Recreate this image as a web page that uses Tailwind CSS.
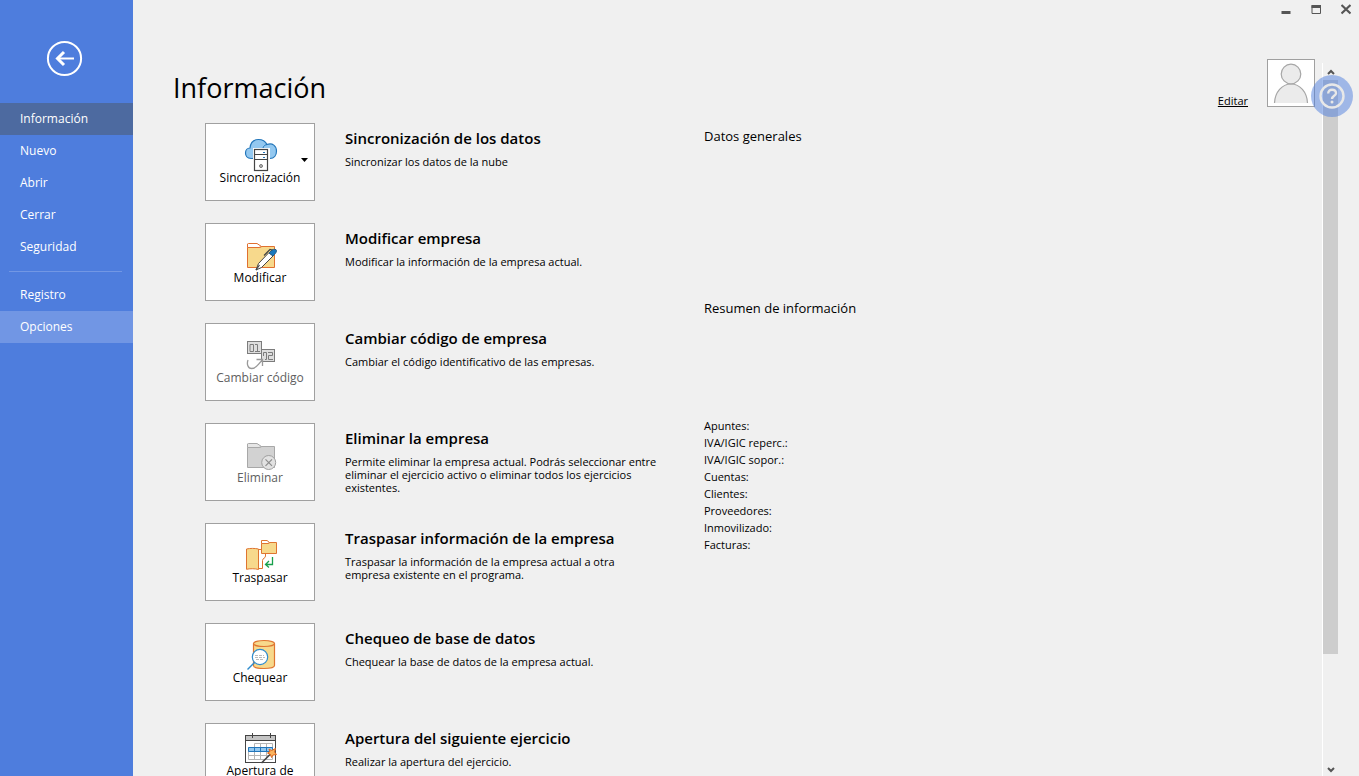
<!DOCTYPE html>
<html lang="es">
<head>
    <meta charset="UTF-8">
    <meta name="viewport" content="width=device-width, initial-scale=1.0">
    <title>Información</title>
    <script src="https://cdn.jsdelivr.net/npm/@tailwindcss/browser@4"></script>
</head>
<body class="relative flex h-screen overflow-hidden bg-[#f0f0f0] font-['Open_Sans','Noto_Sans',sans-serif] text-black">

    <!-- Sidebar -->
    <aside class="w-[133px] shrink-0 bg-[#4e7ddd] text-[12px] text-white">
        <div class="flex h-[103px] items-center pt-[13px] pl-[46px]">
            <button aria-label="Volver" class="block">
                <svg class="block" width="37" height="37" viewBox="0 0 37 37" fill="none" stroke="#fff">
                    <circle cx="18.5" cy="18.5" r="16.6" stroke-width="2"/>
                    <path d="M11.5 18.5H28" stroke-width="2"/>
                    <path d="M18 12L11.5 18.5L18 25" stroke-width="3"/>
                </svg>
            </button>
        </div>
        <nav>
            <a href="#" class="block h-8 bg-[#4d6aa0] pl-5 leading-8">Información</a>
            <a href="#" class="block h-8 pl-5 leading-8">Nuevo</a>
            <a href="#" class="block h-8 pl-5 leading-8">Abrir</a>
            <a href="#" class="block h-8 pl-5 leading-8">Cerrar</a>
            <a href="#" class="block h-8 pl-5 leading-8">Seguridad</a>
            <hr class="mt-2 mr-[11px] mb-[7px] ml-[9px] border-[#7297e4]">
            <a href="#" class="block h-8 pl-5 leading-8">Registro</a>
            <a href="#" class="block h-8 bg-[#7196e4] pl-5 leading-8">Opciones</a>
        </nav>
    </aside>

    <!-- Content -->
    <main class="flex min-w-0 flex-1 flex-col pt-[59px] pl-10">
        <header class="flex h-16 shrink-0 justify-between pr-[7px]">
            <h1 class="pt-[7px] text-[27px] leading-11">Información</h1>
            <div class="flex items-start gap-[19px]">
                <a href="#" class="mt-[34px] text-[11px] leading-4 underline">Editar</a>
                <div class="size-12 border border-[#a0a0a0] bg-white">
                    <svg class="block" width="46" height="46" viewBox="0 0 46 46" fill="#ebebeb" stroke="#a6a6a6" stroke-width="1.2">
                        <path d="M6.5 43C7 32 14 24 23 24S39 32 39.5 43"/>
                        <circle cx="23" cy="14" r="9.8"/>
                    </svg>
                </div>
            </div>
        </header>

        <div class="flex items-start pl-8">
            <div class="w-[499px] shrink-0">
                <section class="flex h-[100px] gap-[30px]">
                    <button class="relative flex h-[78px] w-[110px] shrink-0 flex-col items-center border border-[#a0a0a0] bg-white pt-3 text-[12px] leading-3">
                        <svg class="shrink-0" width="36" height="36" viewBox="0 0 36 36" fill="none">
                            <path d="M9 22.5C5 22.5 3.5 19.5 3.5 17C3.5 14 5.5 12 8 12C8.500 6.500 12 3.500 16.500 3.500C20.500 3.500 23.500 5.500 25 8.500C30.500 6.500 34.500 10 34.500 15C34.500 19.500 32 22.500 28 22.500Z" fill="#93c8f0" stroke="#2376ba" stroke-width="1.2"/>
                            <path d="M21 12C21.5 10 23 8.8 25 8.5" stroke="#2376ba"/>
                            <rect x="11" y="12" width="17" height="24" fill="#fff"/>
                            <rect x="12.500" y="13.500" width="13" height="21" stroke="#444" stroke-width="1.2"/>
                            <path d="M12.5 18.5H25.5M12.5 23.5H25.5" stroke="#444" stroke-width="1.2"/>
                            <path d="M21 16.5H23M21 21.5H23" stroke="#2376ba"/>
                            <circle cx="19" cy="30" r="1.5" fill="#bbb" stroke="#777"/>
                        </svg>
                        <span>Sincronización</span>
                        <svg class="absolute top-[34px] right-1.5" width="7" height="4" viewBox="0 0 7 4"><path d="M0 0H7L3.5 4Z"/></svg>
                    </button>
                    <div>
                        <h2 class="mt-[5px] text-[15px] leading-5 font-semibold">Sincronización de los datos</h2>
                        <p class="mt-[7px] text-[11px] leading-[13px]">Sincronizar los datos de la nube</p>
                    </div>
                </section>

                <section class="flex h-[100px] gap-[30px]">
                    <button class="flex h-[78px] w-[110px] shrink-0 flex-col items-center border border-[#a0a0a0] bg-white pt-3 text-[12px] leading-3">
                        <svg class="shrink-0" width="36" height="36" viewBox="0 0 36 36" fill="none">
                            <path d="M5.5 31.5V11.5H17L20 10.5H32.5V31.5Z" fill="#f7d98c" stroke="#e07030"/>
                            <path d="M5.5 11.5V8C5.5 7.7 6 7.5 6.5 7.5H15L19.5 10.5L17 11.5Z" fill="#fff" stroke="#e07030"/>
                            <path d="M14 34L16.5 27.5L27 16.5L31 20L19.5 31.5Z" fill="#fff" stroke="#444"/>
                            <path d="M27 17L30 14C31.5 13 34.5 13 34.5 14.5C34.5 16.5 33 18 31 20Z" fill="#1a79bd" stroke="#285f86"/>
                            <path d="M22 19.5L28 13.5L30.5 14M14 34L17.5 29" stroke="#444" stroke-width="1.2"/>
                        </svg>
                        <span>Modificar</span>
                    </button>
                    <div>
                        <h2 class="mt-[5px] text-[15px] leading-5 font-semibold">Modificar empresa</h2>
                        <p class="mt-[7px] text-[11px] leading-[13px]">Modificar la información de la empresa actual.</p>
                    </div>
                </section>

                <section class="flex h-[100px] gap-[30px]">
                    <button disabled class="flex h-[78px] w-[110px] shrink-0 flex-col items-center border border-[#a0a0a0] bg-white pt-3 text-[12px] leading-3 text-[#606060]">
                        <svg class="shrink-0" width="36" height="36" viewBox="0 0 36 36" fill="none" stroke="#7c7c7c">
                            <rect x="5.5" y="5.5" width="14" height="12" fill="#dedede"/>
                            <path d="M8 8.5H11.5V15.5H8ZM13 8.5H15.5V15.5M13 15.5H18"/>
                            <rect x="19.5" y="13.5" width="13" height="12" fill="#dedede"/>
                            <path d="M21.5 20V16.5H24.5V23.5H23M26 16.5H30.5V19.5H26.5V23.5H31"/>
                            <path d="M6 24C4.5 28 6 32.5 9.5 32.5C15 32.5 15.5 28.5 20.5 24" stroke="#999" stroke-width="1.3"/>
                            <path d="M14.5 23.5H20.5V30" stroke="#999" stroke-width="1.3"/>
                        </svg>
                        <span>Cambiar código</span>
                    </button>
                    <div>
                        <h2 class="mt-[5px] text-[15px] leading-5 font-semibold">Cambiar código de empresa</h2>
                        <p class="mt-[7px] text-[11px] leading-[13px]">Cambiar el código identificativo de las empresas.</p>
                    </div>
                </section>

                <section class="flex h-[100px] gap-[30px]">
                    <button disabled class="flex h-[78px] w-[110px] shrink-0 flex-col items-center border border-[#a0a0a0] bg-white pt-3 text-[12px] leading-3 text-[#606060]">
                        <svg class="shrink-0" width="36" height="36" viewBox="0 0 36 36" fill="none" stroke="#a8a8a8">
                            <path d="M5.5 31.5V11.5H17L20 10.5H32.5V31.5Z" fill="#d2d2d2"/>
                            <path d="M5.5 11.5V8C5.5 7.7 6 7.5 6.5 7.5H15L19.5 10.5L17 11.5Z" fill="#e6e6e6"/>
                            <circle cx="26.7" cy="26.5" r="7" fill="#e2e2e2" stroke="#a0a0a0"/>
                            <path d="M23.5 23.3L30 29.8M30 23.3L23.5 29.8" stroke="#8c8c8c" stroke-width="1.2"/>
                        </svg>
                        <span>Eliminar</span>
                    </button>
                    <div>
                        <h2 class="mt-[5px] text-[15px] leading-5 font-semibold">Eliminar la empresa</h2>
                        <p class="mt-[7px] w-80 text-[11px] leading-[13px]">Permite eliminar la empresa actual. Podrás seleccionar entre eliminar el ejercicio activo o eliminar todos los ejercicios existentes.</p>
                    </div>
                </section>

                <section class="flex h-[100px] gap-[30px]">
                    <button class="flex h-[78px] w-[110px] shrink-0 flex-col items-center border border-[#a0a0a0] bg-white pt-3 text-[12px] leading-3">
                        <svg class="shrink-0" width="36" height="36" viewBox="0 0 36 36" fill="none" stroke="#df7530">
                            <path d="M16.5 13.5H19.5M16.5 32.5H20.5V24.5C20.5 22 23.5 22.5 23.5 20V17.5"/>
                            <path d="M4.5 13C8 12.2 13 12.2 16.5 13V33.5C13 32.5 8 32.5 4.5 33.3Z" fill="#f7d98c"/>
                            <path d="M19.5 17.5V7.5H26L28 6.5H34.5V17.5Z" fill="#f7d98c"/>
                            <path d="M19.5 7.5V4.5H25L27.5 6.5L26 7.5Z" fill="#fff"/>
                            <path d="M30.5 21V28.5H24M27 25L23.5 28.5L27 31.5" stroke="#18a04c" stroke-width="1.3"/>
                        </svg>
                        <span>Traspasar</span>
                    </button>
                    <div>
                        <h2 class="mt-[5px] text-[15px] leading-5 font-semibold">Traspasar información de la empresa</h2>
                        <p class="mt-[7px] w-72 text-[11px] leading-[13px]">Traspasar la información de la empresa actual a otra empresa existente en el programa.</p>
                    </div>
                </section>

                <section class="flex h-[100px] gap-[30px]">
                    <button class="flex h-[78px] w-[110px] shrink-0 flex-col items-center border border-[#a0a0a0] bg-white pt-3 text-[12px] leading-3">
                        <svg class="shrink-0" width="36" height="36" viewBox="0 0 36 36" fill="none">
                            <path d="M11.5 7.5V29.5C11.5 33.5 32.5 33.5 32.5 29.5V7.5" fill="#f7d98c" stroke="#df7530" stroke-width="1.2"/>
                            <ellipse cx="22" cy="7.5" rx="10.5" ry="3" fill="#f7d98c" stroke="#df7530" stroke-width="1.2"/>
                            <circle cx="18" cy="21" r="7.7" fill="#fff" stroke="#2f8bcc" stroke-width="1.2"/>
                            <path d="M12.5 26.5L5.5 33.5" stroke="#2f8bcc" stroke-width="1.4"/>
                            <path d="M13 19.5H22M13 21.5H23M14 23.5H22" stroke="#aaa" stroke-width="0.8" stroke-dasharray="3 1"/>
                        </svg>
                        <span>Chequear</span>
                    </button>
                    <div>
                        <h2 class="mt-[5px] text-[15px] leading-5 font-semibold">Chequeo de base de datos</h2>
                        <p class="mt-[7px] text-[11px] leading-[13px]">Chequear la base de datos de la empresa actual.</p>
                    </div>
                </section>

                <section class="flex h-[100px] gap-[30px]">
                    <button class="flex h-[78px] w-[110px] shrink-0 flex-col items-center border border-[#a0a0a0] bg-white pt-[5px] text-[12px] leading-4">
                        <svg class="-mb-0.5 shrink-0" width="36" height="36" viewBox="0 0 36 36" fill="none">
                            <rect x="3.5" y="6.5" width="30" height="27" fill="#fff" stroke="#444"/>
                            <path d="M4 7H33V11H4Z" fill="#c4c4c4"/>
                            <path d="M3.5 11.5H33.5M10.5 4V9M28.5 4V9" stroke="#444"/>
                            <path d="M12.5 14.5H30.5V30.5H6.5V18.5M12.5 14.5V30.5M18.5 14.5V30.5M24.5 14.5V30.5M6.5 26.5H30.5" stroke="#b4b4b4"/>
                            <path d="M6.5 18.5H30.5V22.5H6.5ZM12.5 18.5V22.5M18.5 18.5V22.5M24.5 18.5V22.5" fill="#93c8f0" stroke="#2376ba"/>
                            <path d="M19.5 34L29 24.5" stroke="#444" stroke-width="1.6"/>
                            <path d="M27 20L29.5 21.5L33.5 19.5L32.5 23L34.5 25.5L31 26L29.5 28.5L28.5 25.5L25.5 24L28 22.5Z" fill="#f9b35e" stroke="#e2691e"/>
                        </svg>
                        <span>Apertura de<br>ejercicio</span>
                    </button>
                    <div>
                        <h2 class="mt-[5px] text-[15px] leading-5 font-semibold">Apertura del siguiente ejercicio</h2>
                        <p class="mt-[7px] text-[11px] leading-[13px]">Realizar la apertura del ejercicio.</p>
                    </div>
                </section>
            </div>

            <section>
                <h3 class="mt-[3px] text-[13px] leading-5">Datos generales</h3>
                <h3 class="mt-[152px] text-[13px] leading-5">Resumen de información</h3>
                <ul class="mt-[99px] text-[11px] leading-[17px]">
                    <li>Apuntes:</li>
                    <li>IVA/IGIC reperc.:</li>
                    <li>IVA/IGIC sopor.:</li>
                    <li>Cuentas:</li>
                    <li>Clientes:</li>
                    <li>Proveedores:</li>
                    <li>Inmovilizado:</li>
                    <li>Facturas:</li>
                </ul>
            </section>
        </div>
    </main>

    <!-- Scrollbar -->
    <div class="mt-[63px] mr-5 flex w-[17px] shrink-0 flex-col border-l border-white pr-px">
        <button aria-label="Subir" class="flex h-[17px] shrink-0 items-center justify-center">
            <svg width="8" height="6" viewBox="0 0 8 6" fill="none" stroke="#555" stroke-width="2"><path d="M1 5L4 2L7 5"/></svg>
        </button>
        <div class="flex-1">
            <div class="h-[84%] bg-[#cdcdcd]"></div>
        </div>
        <button aria-label="Bajar" class="flex h-[13px] shrink-0 items-center justify-center">
            <svg width="8" height="6" viewBox="0 0 8 6" fill="none" stroke="#555" stroke-width="2"><path d="M1 1L4 4L7 1"/></svg>
        </button>
    </div>

    <!-- Window buttons -->
    <div class="absolute top-1 right-2 flex gap-5">
        <button aria-label="Minimizar"><svg class="block" width="10" height="11" viewBox="0 0 10 11"><path d="M0.5 7H9.5V10H0.5Z" fill="#555"/></svg></button>
        <button aria-label="Maximizar"><svg class="block" width="10" height="11" viewBox="0 0 10 11" fill="none" stroke="#555"><path d="M1 1.5H9.500V9.500H1Z"/><path d="M0.5 2.500H10" stroke-width="3"/></svg></button>
        <button aria-label="Cerrar"><svg class="block" width="10" height="11" viewBox="0 0 10 11" fill="none" stroke="#555" stroke-width="2.2"><path d="M0.5 1L9.500 9.500M9.500 1L0.5 9.500"/></svg></button>
    </div>

    <!-- Help bubble -->
    <button aria-label="Ayuda" class="absolute top-[75px] right-1.5 size-[42px] rounded-full bg-[#4e7ddd]/50">
        <svg class="block" width="42" height="42" viewBox="0 0 42 42" fill="none" stroke="#e8e8e8">
            <circle cx="21" cy="21" r="11.5" stroke-width="2.4"/>
            <path d="M17.2 18.5C17.2 16 19 14.7 21 14.7C23.3 14.7 25 16 25 18.2C25 20.8 21 20.8 21 24" stroke-width="2.4"/>
            <circle cx="21" cy="27" r="1.5" fill="#e8e8e8" stroke="none"/>
        </svg>
    </button>
</body>
</html>
